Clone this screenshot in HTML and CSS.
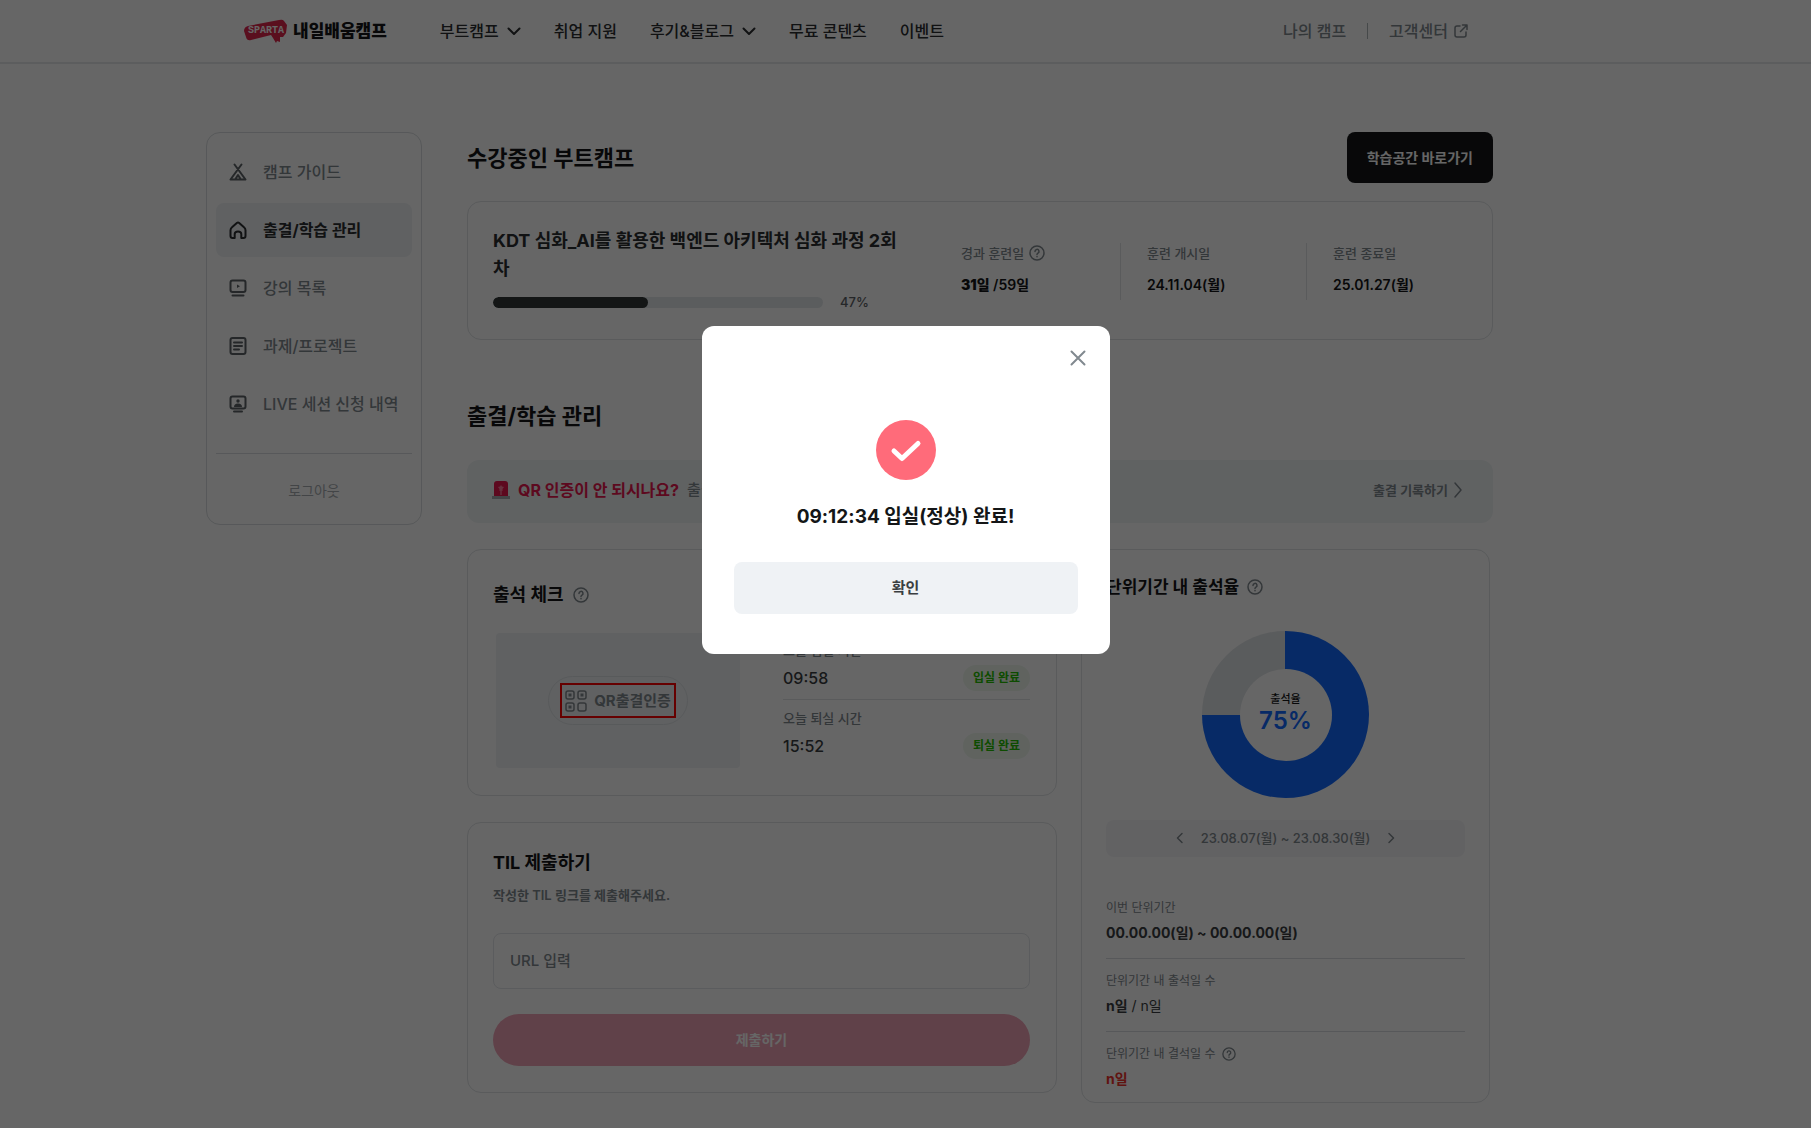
FILE: index.html
```html
<!DOCTYPE html>
<html lang="ko">
<head>
<meta charset="utf-8">
<meta name="viewport" content="width=device-width, initial-scale=1">
<title>내일배움캠프</title>
<link rel="stylesheet" href="styles.css">
</head>
<body>
<svg class="sprite" aria-hidden="true">
  <symbol id="chevron-down" viewBox="0 0 14 14"><path d="M1.500 4.500 7 10l5.500-5.500"/></symbol>
  <symbol id="chevron-left" viewBox="0 0 14 14"><path d="M9 2.500 4.500 7 9 11.500"/></symbol>
  <symbol id="chevron-right" viewBox="0 0 14 14"><path d="M5 2.500 9.500 7 5 11.500"/></symbol>
  <symbol id="help" viewBox="0 0 16 16"><circle cx="8" cy="8" r="7"/><path d="M6 6.400a2 2 0 1 1 3 1.700c-.7.400-1 .7-1 1.300"/><path d="M8 11.400v.3"/></symbol>
</svg>

<header class="header">
  <a class="logo" href="#" aria-label="스파르타 내일배움캠프">
    <svg class="logo-mark" viewBox="0 0 44 24"><path d="M4 7 35 1q4-1 5 1l3 4-1 8-3 4-3 0 0 5-3-1-1 2-3-5-2-3-20 5q-4 1-5-3L0 12q0-4 4-5z"/><text x="22" y="14" text-anchor="middle">SPARTA</text></svg>
    <span class="logo-text">내일배움캠프</span>
  </a>
  <nav class="nav" aria-label="주 메뉴">
    <a href="#">부트캠프<svg class="icon-14 icon-bold"><use href="#chevron-down"/></svg></a>
    <a href="#">취업 지원</a>
    <a href="#">후기&amp;블로그<svg class="icon-14 icon-bold"><use href="#chevron-down"/></svg></a>
    <a href="#">무료 콘텐츠</a>
    <a href="#">이벤트</a>
  </nav>
  <div class="utility">
    <a href="#">나의 캠프</a>
    <span class="utility-line"></span>
    <a href="#">고객센터<svg class="icon-14" viewBox="0 0 14 14"><path d="M6 2H3Q1 2 1 4v7q0 2 2 2h7q2 0 2-2V8M8.500 1H13v4.500M13 1 6.500 7.500"/></svg></a>
  </div>
</header>

<div class="page">
  <aside class="sidebar">
    <nav class="side-nav" aria-label="캠프 메뉴">
      <a href="#"><svg class="icon-18" viewBox="0 0 18 18"><path d="M5.500 1.500 16.500 16.500h-15L12.500 1.500M6.500 16l2.500-4 2.500 4"/></svg>캠프 가이드</a>
      <a class="active" href="#" aria-current="page"><svg class="icon-18" viewBox="0 0 18 18"><path d="M3 6.200 7.800 2q1.200-1 2.400 0L15 6.200q1.500 1.200 1.500 3V15q0 2-2 2h-2.200v-4q0-2.500-3.300-2.500T5.700 13v4H3.500q-2 0-2-2V9.200q0-1.800 1.500-3z"/></svg>출결/학습 관리</a>
      <a href="#"><svg class="icon-18" viewBox="0 0 18 18"><rect x="1.500" y="1.500" width="15" height="11.500" rx="2"/><path d="M3.500 16.500h11"/><path d="m8 5.500 3 1.800-3 1.800z" fill="currentColor" stroke="none"/></svg>강의 목록</a>
      <a href="#"><svg class="icon-18" viewBox="0 0 18 18"><rect x="1.500" y="1" width="15" height="16" rx="2"/><path d="M5 5.500h8M5 9h8M5 12.500h5"/></svg>과제/프로젝트</a>
      <a href="#"><svg class="icon-18" viewBox="0 0 18 18"><rect x="1.500" y="1.500" width="15" height="12" rx="2"/><path d="M5 16.500h8"/><path d="M5 12q0-3.500 4-3.500t4 3.500z" fill="currentColor" stroke="none"/><circle cx="9" cy="6" r="1.700" fill="currentColor" stroke="none"/></svg>LIVE 세션 신청 내역</a>
    </nav>
    <button class="logout" type="button">로그아웃</button>
  </aside>

  <main class="main">
    <div class="camp-head">
      <h1>수강중인 부트캠프</h1>
      <button class="go-button" type="button">학습공간 바로가기</button>
    </div>

    <section class="card camp">
      <div class="camp-info">
        <h2>KDT 심화_AI를 활용한 백엔드 아키텍처 심화 과정 2회차</h2>
        <div class="progress-row">
          <div class="progress"><div class="progress-fill" style="width:47%"></div></div>
          <span>47%</span>
        </div>
      </div>
      <dl class="stats">
        <div><dt>경과 훈련일<svg class="icon-16"><use href="#help"/></svg></dt><dd><strong>31일</strong> /59일</dd></div>
        <div><dt>훈련 개시일</dt><dd>24.11.04(월)</dd></div>
        <div><dt>훈련 종료일</dt><dd>25.01.27(월)</dd></div>
      </dl>
    </section>

    <h2 class="section-title">출결/학습 관리</h2>

    <div class="banner">
      <svg class="siren" viewBox="0 0 18 20"><path class="siren-lamp" d="M2 16V4q0-3 3-3h8q3 0 3 3v12z"/><path class="siren-light" d="M9 5 10 6.500l2 .5-1.500 2 .2 2L9 10.200 7.300 11l.2-2L6 7l2-.5zM8.300 10h1.400v5H8.300z"/><path class="siren-base" d="M0 16h18v3H0z"/></svg>
      <strong>QR 인증이 안 되시나요?</strong>
      <span>출결</span>
      <a href="#">출결 기록하기<svg class="icon-18" viewBox="0 0 18 18"><path d="m6 2 6 7-6 7"/></svg></a>
    </div>

    <div class="board">
      <div class="board-left">
        <section class="card check">
          <h3>출석 체크<svg class="icon-16"><use href="#help"/></svg></h3>
          <div class="check-body">
            <div class="qr-panel">
              <button class="qr-button" type="button">
                <span class="qr-mark">
                  <svg class="qr-icon" viewBox="0 0 22 22"><rect x="1" y="1" width="8" height="8" rx="2"/><rect x="13" y="1" width="8" height="8" rx="2"/><rect x="1" y="13" width="8" height="8" rx="2"/><rect x="13" y="13" width="8" height="8" rx="2"/><path d="M3.500 3.500h3v3h-3zM15.500 3.500h3v3h-3zM3.500 15.500h3v3h-3z" fill="currentColor" stroke="none"/></svg>
                  QR출결인증
                </span>
              </button>
            </div>
            <dl class="times">
              <div><dt>오늘 입실 시간</dt><dd>09:58<span class="badge">입실 완료</span></dd></div>
              <div><dt>오늘 퇴실 시간</dt><dd>15:52<span class="badge">퇴실 완료</span></dd></div>
            </dl>
          </div>
        </section>

        <form class="card til">
          <h3>TIL 제출하기</h3>
          <label for="til-url">작성한 TIL 링크를 제출해주세요.</label>
          <input id="til-url" type="url" placeholder="URL 입력">
          <button type="button">제출하기</button>
        </form>
      </div>

      <section class="card rate">
        <h3>단위기간 내 출석율<svg class="icon-16"><use href="#help"/></svg></h3>
        <div class="donut">
          <div class="donut-hole"><span>출석율</span><strong>75%</strong></div>
        </div>
        <div class="period">
          <button type="button" aria-label="이전 기간"><svg class="icon-14"><use href="#chevron-left"/></svg></button>
          <span>23.08.07(월) ~ 23.08.30(월)</span>
          <button type="button" aria-label="다음 기간"><svg class="icon-14"><use href="#chevron-right"/></svg></button>
        </div>
        <dl class="details">
          <div><dt>이번 단위기간</dt><dd><strong>00.00.00(일) ~ 00.00.00(일)</strong></dd></div>
          <div><dt>단위기간 내 출석일 수</dt><dd><strong>n일</strong> / n일</dd></div>
          <div><dt>단위기간 내 결석일 수<svg class="icon-14"><use href="#help"/></svg></dt><dd class="absent"><strong>n일</strong></dd></div>
        </dl>
      </section>
    </div>
  </main>
</div>

<div class="overlay">
  <div class="modal" role="dialog" aria-modal="true" aria-labelledby="modal-title">
    <button class="close" type="button" aria-label="닫기"><svg class="icon-16" viewBox="0 0 16 16"><path d="m1.500 1.500 13 13M14.500 1.500l-13 13"/></svg></button>
    <svg class="done" viewBox="0 0 60 60"><circle cx="30" cy="30" r="30"/><path d="m18 31 8 7.500 16-15"/></svg>
    <h2 id="modal-title">09:12:34 입실(정상) 완료!</h2>
    <button class="confirm" type="button">확인</button>
  </div>
</div>
</body>
</html>
```
FILE: styles.css
```css
* { box-sizing: border-box; }

body {
  margin: 0;
  background: #fff;
  color: #141617;
  font-family: "Inter", "Noto Sans CJK KR", sans-serif;
  font-size: 14px;
  line-height: 20px;
}

h1, h2, h3, dl, dd { margin: 0; }
a { color: inherit; text-decoration: none; }
button, input { font: inherit; color: inherit; }
button { padding: 0; border: 0; background: none; cursor: pointer; }

svg {
  flex: none;
  fill: none;
  stroke: currentColor;
  stroke-width: 1.5;
  stroke-linecap: round;
  stroke-linejoin: round;
}
.sprite { position: absolute; width: 0; height: 0; }
.icon-14 { width: 14px; height: 14px; }
.icon-16 { width: 16px; height: 16px; }
.icon-18 { width: 18px; height: 18px; }
.icon-bold { stroke-width: 2; }

/* Header */
.header {
  display: flex;
  align-items: center;
  height: 64px;
  padding: 0 343px 0 244px;
  border-bottom: 2px solid #e6e8ea;
  font-size: 16px;
  font-weight: 500;
  line-height: 24px;
}
.logo { display: flex; align-items: center; gap: 5px; margin-right: 53px; }
.logo-mark { width: 44px; height: 24px; fill: #e0264c; stroke: none; }
.logo-mark text { fill: #fff; font: bold 10px "Liberation Mono", monospace; }
.logo-text { font-size: 17px; font-weight: 900; }
.nav { display: flex; gap: 33px; color: #2b2e30; white-space: nowrap; }
.nav a { display: flex; align-items: center; gap: 8px; }
.utility { display: flex; align-items: center; gap: 21px; margin-left: auto; color: #81898f; white-space: nowrap; }
.utility a { display: flex; align-items: center; gap: 6px; }
.utility-line { width: 1px; height: 16px; background: #b0b6ba; }

/* Page frame */
.page {
  display: flex;
  align-items: flex-start;
  gap: 45px;
  padding: 68px 318px 26px 206px;
}
.sidebar {
  flex: none;
  width: 216px;
  padding: 12px 9px 21px;
  border: 1px solid #d9dde0;
  border-radius: 14px;
}
.side-nav { display: flex; flex-direction: column; gap: 4px; padding-bottom: 22px; border-bottom: 1px solid #d9dde0; }
.side-nav a {
  display: flex;
  align-items: center;
  gap: 16px;
  height: 54px;
  padding-left: 13px;
  border-radius: 8px;
  color: #81898f;
  font-size: 16px;
  font-weight: 500;
  white-space: nowrap;
}
.side-nav svg { color: #5c6367; stroke-width: 2; }
.side-nav .active { background: #f0f3f6; color: #2b2e30; font-weight: 700; }
.side-nav .active svg { color: #2b2e30; }
.logout { display: block; width: 100%; margin-top: 25px; color: #a7adb1; line-height: 24px; }

.main { flex: 1; min-width: 0; }
.card { border: 1px solid #e0e3e6; border-radius: 14px; }

/* Current camp */
.camp-head { display: flex; align-items: center; justify-content: space-between; }
.camp-head h1, .section-title { font-size: 22px; font-weight: 700; line-height: 32px; }
.go-button {
  padding: 0 20px;
  border-radius: 8px;
  background: #141617;
  color: #fff;
  font-weight: 700;
  line-height: 51px;
}
.camp { display: flex; align-items: center; margin-top: 18px; padding: 25px 0 28px 25px; }
.camp-info { flex: 1; padding-right: 24px; }
.camp-info h2 { color: #2b2e30; font-size: 18px; font-weight: 700; line-height: 28px; }
.progress-row { display: flex; align-items: center; gap: 17px; margin-top: 10px; color: #5c6367; font-size: 13px; font-weight: 500; line-height: 18px; }
.progress { width: 330px; height: 11px; border-radius: 6px; background: #e4e9ec; overflow: hidden; }
.progress-fill { height: 100%; border-radius: 6px; background: #323838; }
.stats { display: flex; padding-top: 4px; }
.stats > div { width: 186px; height: 57px; padding-left: 26px; border-left: 1px solid #e0e3e6; }
.stats > div:first-child { border-color: transparent; }
.stats dt { display: flex; align-items: center; gap: 5px; color: #81898f; font-size: 13px; font-weight: 500; }
.stats dd { margin-top: 12px; font-weight: 600; }

/* QR banner */
.section-title { margin-top: 60px; }
.banner {
  display: flex;
  align-items: center;
  gap: 8px;
  height: 63px;
  margin-top: 28px;
  padding: 0 26px 4px 25px;
  border-radius: 12px;
  background: #f0f4f6;
  color: #81898f;
  font-size: 15px;
}
.banner strong { color: #e8174e; font-size: 16px; }
.banner span { font-weight: 500; }
.banner a { display: flex; align-items: center; gap: 1px; margin-left: auto; font-size: 13px; font-weight: 600; }
.siren { width: 18px; height: 20px; stroke: none; }
.siren-lamp { fill: #e8174e; }
.siren-light { fill: #ff7d9c; }
.siren-base { fill: #a7adb1; }

/* Attendance board */
.board { display: flex; align-items: flex-start; gap: 24px; margin-top: 26px; padding-right: 3px; }
.board-left { flex: 1; min-width: 0; display: flex; flex-direction: column; gap: 26px; }
.card h3 { display: flex; align-items: center; gap: 9px; font-size: 18px; font-weight: 700; line-height: 26px; }
.card h3 svg, .details svg { color: #81898f; }

.check { padding: 32px 26px 27px 25px; }
.check-body { display: flex; gap: 43px; margin-top: 25px; padding-left: 3px; }
.qr-panel { flex: 1; display: grid; place-items: center; height: 135px; border-radius: 4px; background: #f0f3f6; }
.qr-button { padding: 6px 11px; border: 1px solid #dde1e4; border-radius: 25px; color: #81898f; font-size: 15px; font-weight: 700; }
.qr-mark { display: flex; align-items: center; gap: 7px; height: 35px; padding: 0 3px; border: 2px solid #f00; white-space: nowrap; }
.qr-icon { width: 22px; height: 22px; }
.times { width: 247px; padding-top: 7px; }
.times div + div { margin-top: 8px; padding-top: 8px; border-top: 1px solid #e0e3e6; }
.times dt { color: #81898f; font-size: 13px; font-weight: 500; }
.times dd { display: flex; align-items: center; justify-content: space-between; height: 26px; margin-top: 5px; color: #3a3e41; font-size: 16px; font-weight: 500; }
.badge { padding: 0 10px; border-radius: 13px; background: #eff8ee; color: #24bd00; font-size: 12px; font-weight: 700; line-height: 26px; }

.til { display: flex; flex-direction: column; padding: 27px 26px 26px 25px; }
.til label { margin-top: 9px; color: #81898f; font-size: 13px; font-weight: 600; }
.til input {
  height: 56px;
  margin-top: 28px;
  padding: 0 16px 2px;
  border: 1px solid #e4e7ea;
  border-radius: 8px;
  background: #fff;
  font-size: 15px;
  font-weight: 500;
}
.til input::placeholder { color: #81898f; opacity: 1; }
.til button { height: 52px; margin-top: 25px; border-radius: 26px; background: #f0a3b7; color: #fff; font-weight: 700; }

.rate { flex: none; width: 409px; padding: 24px 24px 12px; }
.rate h3 { gap: 8px; font-size: 17px; }
.donut {
  display: grid;
  place-items: center;
  width: 167px;
  height: 167px;
  margin: 31px auto 0;
  border-radius: 50%;
  background: conic-gradient(#1269ff 75%, #e1e5e8 0);
}
.donut-hole {
  display: flex;
  flex-direction: column;
  align-items: center;
  width: 92px;
  height: 92px;
  padding-top: 22px;
  border-radius: 50%;
  background: #fff;
}
.donut-hole span { font-size: 11px; font-weight: 500; line-height: 16px; }
.donut-hole strong { color: #1269ff; font-size: 24px; font-weight: 600; line-height: 28px; }
.period {
  display: flex;
  align-items: center;
  justify-content: center;
  gap: 14px;
  height: 37px;
  margin-top: 22px;
  padding-bottom: 2px;
  border-radius: 8px;
  background: #f5f5f8;
  color: #81898f;
  font-size: 13px;
  font-weight: 500;
}
.period button { display: flex; }
.details { margin-top: 41px; }
.details div + div { margin-top: 14px; padding-top: 12px; border-top: 1px solid #d9dde0; }
.details dt { display: flex; align-items: center; gap: 6px; color: #81898f; font-size: 12px; }
.details dd { margin-top: 4px; color: #3a3e41; line-height: 22px; }
.details dd.absent { color: #f0322b; }

/* Check-in dialog */
.overlay {
  position: fixed;
  inset: 0;
  display: flex;
  align-items: flex-start;
  justify-content: center;
  padding-top: 326px;
  background: rgba(0, 0, 0, 0.6);
}
.modal {
  display: flex;
  flex-direction: column;
  align-items: center;
  width: 408px;
  padding: 24px 24px 40px;
  border-radius: 12px;
  background: #fff;
}
.close { display: flex; align-self: flex-end; color: #81898f; }
.close svg { stroke-width: 2; }
.done { width: 60px; height: 60px; margin-top: 54px; }
.done circle { fill: #ff6b7a; stroke: none; }
.done path { stroke: #fff; stroke-width: 5; }
.modal h2 { margin-top: 23px; font-size: 19px; font-weight: 700; line-height: 28px; }
.confirm { width: 344px; height: 52px; margin-top: 31px; border-radius: 8px; background: #eff2f5; color: #3a3e41; font-size: 15px; font-weight: 600; }
```
